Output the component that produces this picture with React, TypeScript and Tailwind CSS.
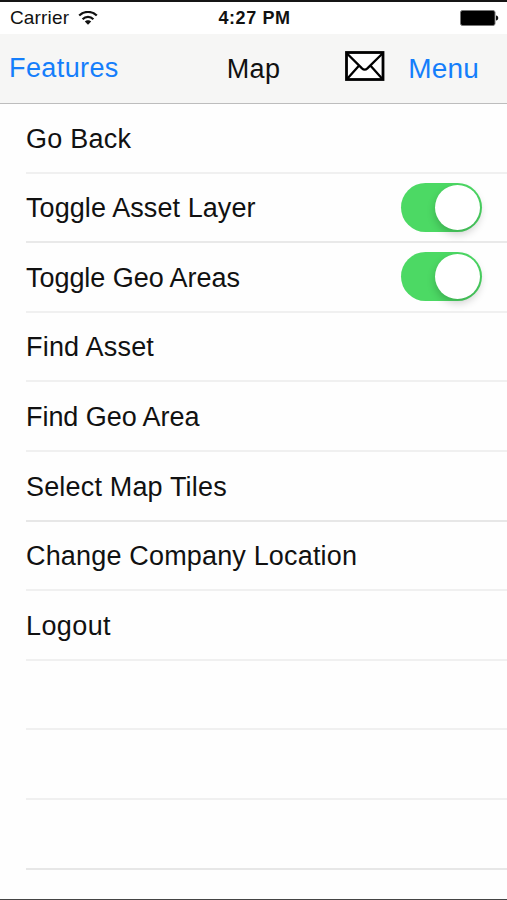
import { useState } from 'react'

interface MenuItem {
  label: string
  tracking: string
  line: string
  toggle?: boolean
}

const items: MenuItem[] = [
  { label: 'Go Back', tracking: 'tracking-[0.25px]', line: 'border-[#f0f0f0]' },
  {
    label: 'Toggle Asset Layer',
    tracking: 'tracking-[0.08px]',
    line: 'border-[#e9e9e9]',
    toggle: true,
  },
  {
    label: 'Toggle Geo Areas',
    tracking: 'tracking-[-0.05px]',
    line: 'border-[#f0f0f0]',
    toggle: true,
  },
  { label: 'Find Asset', tracking: 'tracking-[0.2px]', line: 'border-[#f0f0f0]' },
  { label: 'Find Geo Area', tracking: 'tracking-[-0.05px]', line: 'border-[#f0f0f0]' },
  { label: 'Select Map Tiles', tracking: 'tracking-[0.17px]', line: 'border-[#e7e7e7]' },
  {
    label: 'Change Company Location',
    tracking: 'tracking-[0.17px]',
    line: 'border-[#f0f0f0]',
  },
  { label: 'Logout', tracking: 'tracking-[0.4px]', line: 'border-[#f0f0f0]' },
  { label: '', tracking: '', line: 'border-[#f0f0f0]' },
  { label: '', tracking: '', line: 'border-[#f0f0f0]' },
  { label: '', tracking: '', line: 'border-[#e7e7e7]' },
]

const WifiIcon: React.FC = () => (
  <svg width="20" height="15" viewBox="0 0 20 15" fill="none" stroke="#111">
    <path d="M1.2 4.6C6-.3 14-.3 18.8 4.6" strokeWidth="2.2" />
    <path d="M4.6 8.2C7.6 5.2 12.4 5.2 15.4 8.2" strokeWidth="2.2" />
    <path d="M10 13.8 6.8 10.6C8.6 8.7 11.4 8.7 13.2 10.6Z" fill="#111" stroke="none" />
  </svg>
)

const BatteryIcon: React.FC = () => (
  <svg width="39" height="16" viewBox="0 0 39 16">
    <rect x=".5" y=".5" width="34.5" height="15" rx="2" fill="#000" stroke="#777" />
    <path d="M36 5.5C39 5.8 39 10.2 36 10.5Z" fill="#111" />
  </svg>
)

const MailIcon: React.FC = () => (
  <svg width="40" height="30" viewBox="0 0 40 30" fill="none" stroke="#000">
    <rect x="1.5" y="1.5" width="36.5" height="27" fill="#fff" strokeWidth="2.8" />
    <path
      d="M2 2.5 17 17.4Q19.7 19.8 22.4 17.4L37.5 2.5M2.5 27.5 13.7 15M37 27.5 25.8 15"
      strokeWidth="2.3"
    />
  </svg>
)

const Toggle: React.FC<{ label: string }> = ({ label }) => {
  const [on, setOn] = useState(true)

  return (
    <button
      role="switch"
      aria-checked={on}
      aria-label={label}
      onClick={() => setOn(!on)}
      className={`flex items-center w-[81px] h-[49px] px-[2px] rounded-full ${
        on ? 'justify-end bg-[#4cd964]' : 'justify-start bg-[#e5e5e5]'
      }`}
    >
      <span className="w-[45px] h-[45px] rounded-full bg-white shadow-[0_4px_8px_rgba(0,0,0,0.2)]" />
    </button>
  )
}

const App: React.FC = () => {
  return (
    <div className="flex flex-col h-screen overflow-hidden bg-[#fefefe] text-[#111] border-t-2 border-t-[#151515] border-b border-b-[#444] font-['Liberation_Sans',Arial,sans-serif]">
      <div className="grid grid-cols-3 items-center h-8 shrink-0 pl-[10px] pr-[8px] bg-white">
        <div className="flex items-center gap-[9px] pt-px text-[19px] tracking-[0.15px]">
          Carrier
          <WifiIcon />
        </div>
        <div className="pt-px text-center text-[18px] font-bold tracking-[0.6px]">
          4:27 PM
        </div>
        <div className="flex justify-end">
          <BatteryIcon />
        </div>
      </div>

      <header className="grid grid-cols-3 items-center h-[70px] shrink-0 pl-[9px] pr-[28px] bg-[#f6f6f5] border-b border-[#bdbdbd] text-[27px]">
        <a href="#features" className="tracking-[0.4px] text-[#157efb]">
          Features
        </a>
        <h1 className="pt-[2px] pl-[19px] text-center tracking-[0.4px]">Map</h1>
        <div className="flex items-center justify-end gap-[23px]">
          <div className="pb-[5px]">
            <MailIcon />
          </div>
          <a href="#menu" className="text-[28px] tracking-[0.2px] text-[#157efb]">
            Menu
          </a>
        </div>
      </header>

      <ul className="pl-[26px]">
        {items.map((item, index) => (
          <li
            key={index}
            className={`flex items-center justify-between h-[69.6px] pr-[25px] border-b-2 text-[27px] ${item.line}`}
          >
            <span className={`pt-[2px] ${item.tracking}`}>{item.label}</span>
            {item.toggle && <Toggle label={item.label} />}
          </li>
        ))}
      </ul>
    </div>
  )
}

export default App
